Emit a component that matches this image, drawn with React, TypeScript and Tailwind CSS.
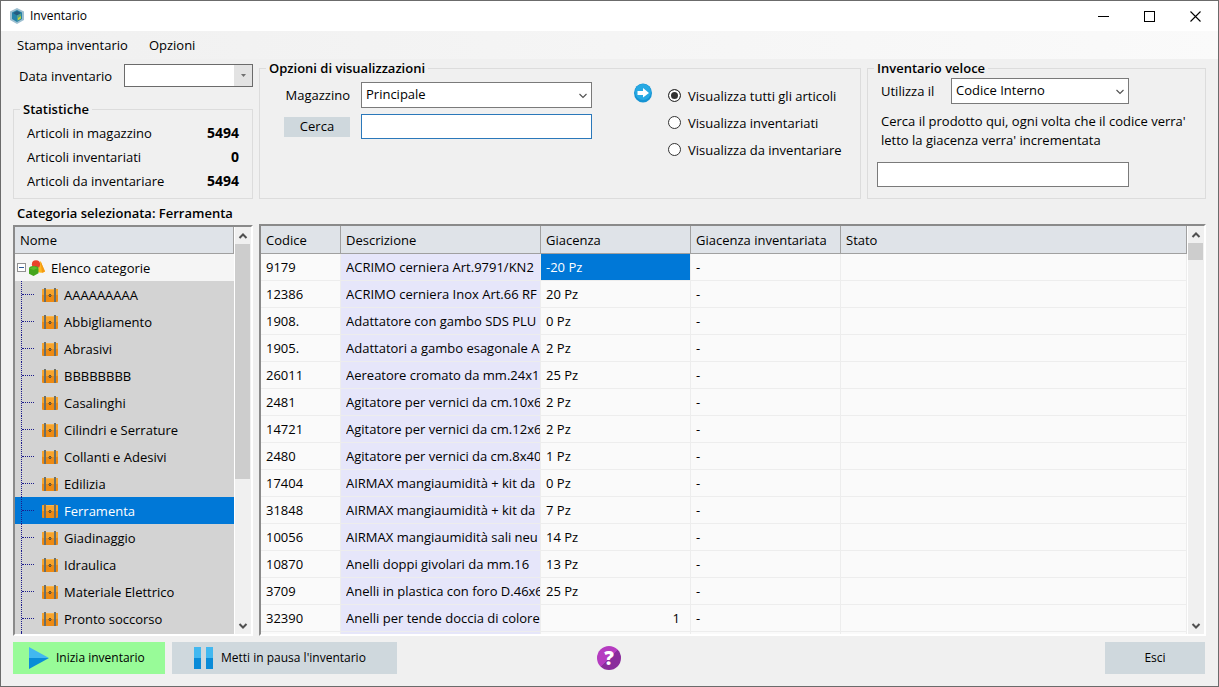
import { useState } from 'react'
import type { ReactNode } from 'react'

const stats = [
  { label: 'Articoli in magazzino', value: 5494 },
  { label: 'Articoli inventariati', value: 0 },
  { label: 'Articoli da inventariare', value: 5494 },
]

const filters = [
  { id: 'tutti', label: 'Visualizza tutti gli articoli' },
  { id: 'inventariati', label: 'Visualizza inventariati' },
  { id: 'da-inventariare', label: 'Visualizza da inventariare' },
]

const categories = [
  'AAAAAAAAA',
  'Abbigliamento',
  'Abrasivi',
  'BBBBBBBB',
  'Casalinghi',
  'Cilindri e Serrature',
  'Collanti e Adesivi',
  'Edilizia',
  'Ferramenta',
  'Giadinaggio',
  'Idraulica',
  'Materiale Elettrico',
  'Pronto soccorso',
]

interface Article {
  code: string
  description: string
  stock: string
}

const articles: Article[] = [
  { code: '9179', description: 'ACRIMO cerniera Art.9791/KN2', stock: '-20 Pz' },
  { code: '12386', description: 'ACRIMO cerniera Inox Art.66 RF', stock: '20 Pz' },
  { code: '1908.', description: 'Adattatore con gambo SDS PLU', stock: '0 Pz' },
  { code: '1905.', description: 'Adattatori a gambo esagonale A', stock: '2 Pz' },
  { code: '26011', description: 'Aereatore cromato da mm.24x1', stock: '25 Pz' },
  { code: '2481', description: 'Agitatore per vernici da cm.10x6', stock: '2 Pz' },
  { code: '14721', description: 'Agitatore per vernici da cm.12x6', stock: '2 Pz' },
  { code: '2480', description: 'Agitatore per vernici da cm.8x40', stock: '1 Pz' },
  { code: '17404', description: 'AIRMAX mangiaumidità + kit da', stock: '0 Pz' },
  { code: '31848', description: 'AIRMAX mangiaumidità + kit da', stock: '7 Pz' },
  { code: '10056', description: 'AIRMAX mangiaumidità sali neu', stock: '14 Pz' },
  { code: '10870', description: 'Anelli doppi givolari da mm.16', stock: '13 Pz' },
  { code: '3709', description: 'Anelli in plastica con foro D.46x6', stock: '25 Pz' },
  { code: '32390', description: 'Anelli per tende doccia di colore', stock: '1' },
]

function AppLogo() {
  return (
    <svg viewBox="0 0 14 16" className="h-4 w-[14px]" aria-hidden="true">
      <path d="M7 0 L14 3.5 V12 L7 16 L0 12 V3.5 Z" fill="#9dbfd0" />
      <path d="M7 2 L12 4.6 V11 L7 14 L2 11 V4.6 Z" fill="#2583a8" />
      <path d="M3 5 L7 3 L11 5 L7 7.4 Z" fill="#245b80" />
      <path d="M7 7.4 L11 5.4 V10.6 L7 13 Z" fill="#55a38b" />
      <path d="M8 10 L11 8 V10.6 L8 12.3 Z" fill="#c5cf3a" />
    </svg>
  )
}

function ShapesIcon() {
  return (
    <svg viewBox="0 0 16 16" className="h-4 w-4 shrink-0" aria-hidden="true">
      <path d="M11.5 1 L16 11.5 Q12 14 8.5 11.5 Z" fill="#fdb822" />
      <path d="M11.5 1 L16 11.5 Q14.5 12.6 13 12.7 Z" fill="#f59a13" />
      <circle cx="7" cy="4.3" r="4.1" fill="#e8432a" />
      <path d="M0 8.5 Q0 6 4.5 6 Q9.5 6 9.5 8 V13.3 L4.5 16 L0 13.8 Z" fill="#44a51c" />
      <path d="M0.5 8.5 L5 6.3 L9 8 L4.5 10 Z" fill="#5dbb2b" />
    </svg>
  )
}

function CrateIcon() {
  return (
    <svg viewBox="0 0 16 14" className="h-[14px] w-4 shrink-0" aria-hidden="true">
      <rect x="0" y="1" width="16" height="13" rx="1" fill="#ee8a12" />
      <rect x="0" y="1" width="16" height="6" rx="1" fill="#f8a42c" />
      <rect x="2" y="0" width="2" height="14" fill="#6b7068" />
      <rect x="12" y="0" width="2" height="14" fill="#6b7068" />
      <rect x="4" y="1" width="8" height="1" fill="#fbb54a" />
      <rect x="7" y="6" width="2" height="3" fill="#5f5038" />
      <rect x="6" y="7" width="4" height="1" fill="#8a6a3a" />
    </svg>
  )
}

function Chevron({ className, up, heavy }: { className?: string; up?: boolean; heavy?: boolean }) {
  return (
    <svg viewBox="0 0 10 6" className={`h-[6px] w-[10px] ${className ?? ''}`} aria-hidden="true">
      <path
        d={up ? 'M1.5 5 L5 1.5 L8.5 5' : 'M1.5 1 L5 4.5 L8.5 1'}
        fill="none"
        stroke="#505050"
        strokeWidth={heavy ? 2 : 1.1}
      />
    </svg>
  )
}

function Panel({ title, className, children }: { title: string; className?: string; children: ReactNode }) {
  return (
    <fieldset className={`min-w-0 border border-[#dcdcdc] ${className ?? ''}`}>
      <legend className="ml-1.5 px-[3px] font-semibold leading-[18px]">{title}</legend>
      {children}
    </fieldset>
  )
}

function ComboBox({ id, value, className }: { id: string; value: string; className: string }) {
  return (
    <div className={`relative ${className}`}>
      <select
        id={id}
        className="h-[26px] w-full appearance-none border border-[#7a7a7a] bg-white px-1 pb-0.5 leading-5 outline-none"
      >
        <option>{value}</option>
      </select>
      <Chevron className="pointer-events-none absolute right-1 top-[11px]" />
    </div>
  )
}

function ScrollBar({ thumb }: { thumb: string }) {
  return (
    <div className="flex w-[17px] shrink-0 flex-col items-center border-l border-white bg-[#f0f0f0]" aria-hidden="true">
      <div className="flex h-[17px] shrink-0 items-center">
        <Chevron up heavy />
      </div>
      <div className="min-h-0 w-full flex-1">
        <div className={`w-[15px] bg-[#cdcdcd] ${thumb}`} />
      </div>
      <div className="flex h-[17px] shrink-0 items-center">
        <Chevron heavy />
      </div>
    </div>
  )
}

function CategoryTree({ selected, onSelect }: { selected: string; onSelect: (name: string) => void }) {
  return (
    <div className="mt-px flex min-h-0 w-60 shrink-0 border-2 border-b-white border-l-[#8a8a8a] border-r-white border-t-[#8a8a8a] bg-[#d3d3d3]">
      <div className="min-w-0 flex-1 overflow-hidden">
        <div className="flex h-[27px] items-center border-b border-r border-[#a0a0a0] bg-[#dfe3e8] px-[5px]">Nome</div>
        <div className="flex h-[27px] items-center bg-[#f5f5f5] pl-0.5">
          <button type="button" aria-label="Comprimi" className="flex h-[9px] w-[9px] items-center justify-center border border-[#919191] bg-white">
            <span className="h-px w-[5px] bg-[#2b5797]" />
          </button>
          <span className="ml-[3px] flex items-center gap-1.5">
            <ShapesIcon />
            Elenco categorie
          </span>
        </div>
        <ul>
          {categories.map((name) => (
            <li key={name} className={name === selected ? 'bg-[#0078d7] text-white' : ''}>
              <button type="button" onClick={() => onSelect(name)} className="flex h-[27px] w-full items-center pl-1.5 text-left">
                <span className="flex h-full w-[13px] items-center border-l border-dotted border-[#1c1c8c]">
                  <span className="w-full border-t border-dotted border-[#1c1c8c]" />
                </span>
                <span className="ml-2 flex items-center gap-1.5">
                  <CrateIcon />
                  {name}
                </span>
              </button>
            </li>
          ))}
        </ul>
        <div className="ml-1.5 h-6 border-l border-dotted border-[#1c1c8c]" />
      </div>
      <ScrollBar thumb="h-[63%]" />
    </div>
  )
}

function ArticleTable() {
  const head = 'h-7 border-b border-r border-[#a0a0a0] bg-[#dfe3e8] px-[5px] text-left font-normal'
  const cell = 'h-[27px] border-b border-r border-[#ededed] pl-[5px]'

  return (
    <div className="flex min-h-0 min-w-0 flex-1 border-2 border-b-white border-l-[#8a8a8a] border-r-white border-t-[#8a8a8a] bg-[#fafafa]">
      <div className="min-w-0 flex-1 overflow-hidden">
        <table className="w-full table-fixed border-separate border-spacing-0">
          <thead>
            <tr>
              <th className={`w-20 ${head}`}>Codice</th>
              <th className={`w-[200px] ${head}`}>Descrizione</th>
              <th className={`w-[150px] ${head}`}>Giacenza</th>
              <th className={`w-[150px] ${head}`}>Giacenza inventariata</th>
              <th className={head}>Stato</th>
            </tr>
          </thead>
          <tbody>
            {articles.map((article, index) => (
              <tr key={article.code}>
                <td className={cell}>{article.code}</td>
                <td className={`bg-[#e6e6fa] ${cell}`}>
                  <div className="overflow-hidden whitespace-nowrap">{article.description}</div>
                </td>
                <td
                  className={`${cell} ${index === 0 ? 'bg-[#0078d7] text-white' : ''} ${
                    article.stock.endsWith('Pz') ? '' : 'pr-[10px] text-right'
                  }`}
                >
                  {article.stock}
                </td>
                <td className={cell}>-</td>
                <td className={cell} />
              </tr>
            ))}
            <tr>
              <td className={cell} />
              <td className={`bg-[#e6e6fa] ${cell}`} />
              <td className={cell} />
              <td className={cell} />
              <td className={cell} />
            </tr>
          </tbody>
        </table>
      </div>
      <ScrollBar thumb="h-[17px]" />
    </div>
  )
}

export default function App() {
  const [filter, setFilter] = useState('tutti')
  const [category, setCategory] = useState('Ferramenta')

  return (
    <div className="flex h-screen flex-col overflow-hidden border border-[#6b6b6b] bg-[#f0f0f0] font-['Open_Sans','Noto_Sans',sans-serif] text-[13px] leading-[18px] text-black">
      {/* Title bar */}
      <header className="flex h-[30px] shrink-0 items-center bg-white pl-[9px]">
        <AppLogo />
        <h1 className="ml-1.5 text-[12px]">Inventario</h1>
        <div className="ml-auto flex h-7">
          <button type="button" aria-label="Riduci a icona" className="flex w-[46px] items-center justify-center">
            <svg viewBox="0 0 11 11" className="h-[11px] w-[11px]">
              <path d="M0 5.5 H11" stroke="#000" />
            </svg>
          </button>
          <button type="button" aria-label="Ingrandisci" className="flex w-[46px] items-center justify-center">
            <svg viewBox="0 0 11 11" className="h-[11px] w-[11px]">
              <rect x="0.5" y="0.5" width="10" height="10" fill="none" stroke="#000" />
            </svg>
          </button>
          <button type="button" aria-label="Chiudi" className="flex w-[46px] items-center justify-center">
            <svg viewBox="0 0 11 11" className="h-[11px] w-[11px]">
              <path d="M0.5 0.5 L10.5 10.5 M10.5 0.5 L0.5 10.5" stroke="#000" strokeWidth="1.1" />
            </svg>
          </button>
        </div>
      </header>

      <nav className="flex h-7 shrink-0 items-center gap-[21px] bg-linear-to-r from-[#f0f0f0] to-[#fafafa] pl-4">
        <button type="button">Stampa inventario</button>
        <button type="button">Opzioni</button>
      </nav>

      <main className="flex min-h-0 flex-1 flex-col px-3">
        {/* Top panels */}
        <section className="flex h-[140px] shrink-0 gap-[6px]">
          <div className="flex w-60 shrink-0 flex-col justify-between pt-[5px]">
            <div className="flex items-center justify-between pl-1.5">
              <label htmlFor="data">Data inventario</label>
              <div className="flex h-[23px] w-[129px] border border-[#6b6b6b] bg-white">
                <input id="data" type="text" className="min-w-0 flex-1 px-1 outline-none" />
                <button type="button" aria-label="Apri calendario" className="flex w-[18px] items-center justify-center bg-[#e3e3e3]">
                  <svg viewBox="0 0 5 3" className="h-[3px] w-[5px]">
                    <path d="M0 0 H5 L2.5 3 Z" fill="#707070" />
                  </svg>
                </button>
              </div>
            </div>
            <Panel title="Statistiche" className="pb-[5px]">
              <dl className="pl-[13px] pr-[13px] pt-[3px]">
                {stats.map((stat) => (
                  <div key={stat.label} className="flex h-6 items-center justify-between">
                    <dt>{stat.label}</dt>
                    <dd className="text-sm font-bold">{stat.value}</dd>
                  </div>
                ))}
              </dl>
            </Panel>
          </div>

          <Panel title="Opzioni di visualizzazioni" className="flex-1">
            <div className="flex items-start pl-6 pt-[5px]">
              <div className="grid grid-cols-[66px_231px] items-center gap-x-[11px] gap-y-1.5">
                <label htmlFor="magazzino" className="text-right">
                  Magazzino
                </label>
                <ComboBox id="magazzino" value="Principale" className="w-full" />
                <button type="button" className="h-5 bg-[#cfd8dd] pb-0.5">
                  Cerca
                </button>
                <input
                  type="text"
                  aria-label="Cerca articolo"
                  className="h-[25px] w-full border border-[#2a78ba] bg-white px-1 outline-none"
                />
              </div>
              <svg viewBox="0 0 18 20" className="ml-[42px] mt-px h-5 w-[18px] shrink-0" aria-hidden="true">
                <ellipse cx="9" cy="10" rx="9" ry="9.6" fill="#1593d3" />
                <ellipse cx="9" cy="9" rx="8" ry="8" fill="#27a9e3" />
                <path d="M3.5 8 H9 V5 L15 10 L9 14.5 V12 H3.5 Z" fill="#fff" />
              </svg>
              <div className="ml-4">
                {filters.map((item) => (
                  <label key={item.id} className="flex h-[27px] items-center gap-[7px] whitespace-nowrap">
                    <input
                      type="radio"
                      name="filtro"
                      checked={filter === item.id}
                      onChange={() => setFilter(item.id)}
                      className="h-[13px] w-[13px] appearance-none rounded-full border border-[#333333] bg-white checked:bg-[#333333] checked:shadow-[inset_0_0_0_2px_#fff]"
                    />
                    {item.label}
                  </label>
                ))}
              </div>
            </div>
          </Panel>

          <Panel title="Inventario veloce" className="w-[339px] shrink-0">
            <div className="px-[9px] pt-px">
              <div className="flex items-center pl-1">
                <label htmlFor="codice" className="w-[70px]">
                  Utilizza il
                </label>
                <ComboBox id="codice" value="Codice Interno" className="w-[178px]" />
              </div>
              <label htmlFor="veloce" className="mt-2 block whitespace-nowrap pl-1 leading-[19px]">
                Cerca il prodotto qui, ogni volta che il codice verra'
                <br />
                letto la giacenza verra' incrementata
              </label>
              <input id="veloce" type="text" className="mt-3 block h-[25px] w-[252px] border border-[#7a7a7a] bg-white px-1 outline-none" />
            </div>
          </Panel>
        </section>

        <h2 className="mb-0.5 mt-[5px] shrink-0 pl-1 font-semibold">Categoria selezionata: {category}</h2>

        <section className="flex min-h-0 flex-1 gap-[6px]">
          <CategoryTree selected={category} onSelect={setCategory} />
          <ArticleTable />
        </section>

        {/* Actions */}
        <footer className="mb-3 mt-1.5 flex h-8 shrink-0 items-center justify-between pr-px">
          <div className="flex flex-1 gap-[7px]">
            <button type="button" className="flex h-8 w-[152px] items-center gap-[7px] bg-[#98fb98] pl-4 text-xs">
              <svg viewBox="0 0 20 22" className="h-[22px] w-5" aria-hidden="true">
                <path d="M0 0 L20 11 H0 Z" fill="#42b8f0" />
                <path d="M0 11 H20 L0 22 Z" fill="#0a8bd8" />
              </svg>
              Inizia inventario
            </button>
            <button type="button" className="flex h-8 w-[225px] items-center gap-2 bg-[#cfd8dd] pl-[22px] text-xs">
              <svg viewBox="0 0 19 22" className="h-[22px] w-[19px]" aria-hidden="true">
                <path d="M0 0 H7 V11 H0 Z M12 0 H19 V11 H12 Z" fill="#42b8f0" />
                <path d="M0 11 H7 V22 H0 Z M12 11 H19 V22 H12 Z" fill="#0a8bd8" />
              </svg>
              Metti in pausa l'inventario
            </button>
          </div>
          <button type="button" aria-label="Aiuto" className="flex h-6 w-6 items-center justify-center rounded-full bg-linear-to-br from-[#b53cc0] from-50% to-[#8a2d9c] to-50% text-[19px] font-extrabold text-white">
            ?
          </button>
          <div className="flex flex-1 justify-end">
            <button type="button" className="h-8 w-[100px] bg-[#cfd8dd] text-xs">
              Esci
            </button>
          </div>
        </footer>
      </main>
    </div>
  )
}
